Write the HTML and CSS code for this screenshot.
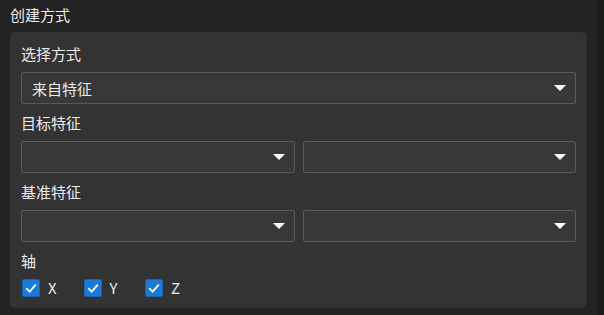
FILE: index.html
```html
<!DOCTYPE html>
<html lang="zh-CN">
<head>
  <meta charset="UTF-8">
  <title>创建方式</title>
  <link rel="stylesheet" href="styles.css">
</head>
<body>
  <div class="page">
    <div class="title">创建方式</div>

    <div class="panel">
      <!-- 选择方式 -->
      <div class="group">
        <div class="label">选择方式</div>
        <div class="select">
          <span class="value">来自特征</span>
          <span class="arrow"></span>
        </div>
      </div>

      <!-- 目标特征 -->
      <div class="group">
        <div class="label">目标特征</div>
        <div class="pair">
          <div class="select"><span class="value"></span><span class="arrow"></span></div>
          <div class="select"><span class="value"></span><span class="arrow"></span></div>
        </div>
      </div>

      <!-- 基准特征 -->
      <div class="group">
        <div class="label">基准特征</div>
        <div class="pair">
          <div class="select"><span class="value"></span><span class="arrow"></span></div>
          <div class="select"><span class="value"></span><span class="arrow"></span></div>
        </div>
      </div>

      <!-- 轴 -->
      <div class="group">
        <div class="label">轴</div>
        <div class="checks">
          <label class="check">
            <span class="box"><svg width="18" height="18" viewBox="0 0 18 18"><path d="M4.2 9.2 L7.6 12.6 L13.8 5.6" fill="none" stroke="#fff" stroke-width="1.8"/></svg></span>
            X
          </label>
          <label class="check">
            <span class="box"><svg width="18" height="18" viewBox="0 0 18 18"><path d="M4.2 9.2 L7.6 12.6 L13.8 5.6" fill="none" stroke="#fff" stroke-width="1.8"/></svg></span>
            Y
          </label>
          <label class="check">
            <span class="box"><svg width="18" height="18" viewBox="0 0 18 18"><path d="M4.2 9.2 L7.6 12.6 L13.8 5.6" fill="none" stroke="#fff" stroke-width="1.8"/></svg></span>
            Z
          </label>
        </div>
      </div>
    </div>
  </div>
</body>
</html>
```

FILE: styles.css
```css
body {
  margin: 0;
  background: #1b1b1b;
  font-family: "Noto Sans CJK SC", "Noto Sans", sans-serif;
  font-size: 15px;
  color: #ececec;
}
.page {
  width: 598px;
  height: 315px;
  background: #232323;
}
.title {
  padding: 5px 0 0 10px;
  height: 20px;
  line-height: 20px;
  margin-bottom: 7px;
}
.panel {
  margin: 0 11px 0 10px;
  padding: 12px 11px 11px 11px;
  background: #333333;
  border-radius: 5px;
}
.group + .group {
  margin-top: 9px;
}
.label {
  height: 20px;
  line-height: 20px;
  margin-bottom: 8px;
}
.select {
  box-sizing: border-box;
  height: 32px;
  display: flex;
  align-items: center;
  padding: 0 9px 0 10px;
  background: #383838;
  border: 1px solid #5a5a5a;
  border-radius: 2px;
}
.select .value {
  flex: 1;
}
.arrow {
  width: 0;
  height: 0;
  border-left: 6px solid transparent;
  border-right: 6px solid transparent;
  border-top: 6px solid #ffffff;
}
.pair {
  display: flex;
  gap: 8px;
}
.pair .select {
  flex: 1;
}
.checks {
  display: flex;
  height: 18px;
  padding-left: 1px;
}
.check {
  display: flex;
  align-items: center;
  gap: 8px;
  width: 61.5px;
  line-height: 18px;
}
.box {
  box-sizing: border-box;
  width: 18px;
  height: 18px;
  background: #1a7ad6;
  border: 1px solid #1566b5;
  border-radius: 2px;
  display: flex;
}
.box svg {
  margin: -1px;
}
```
